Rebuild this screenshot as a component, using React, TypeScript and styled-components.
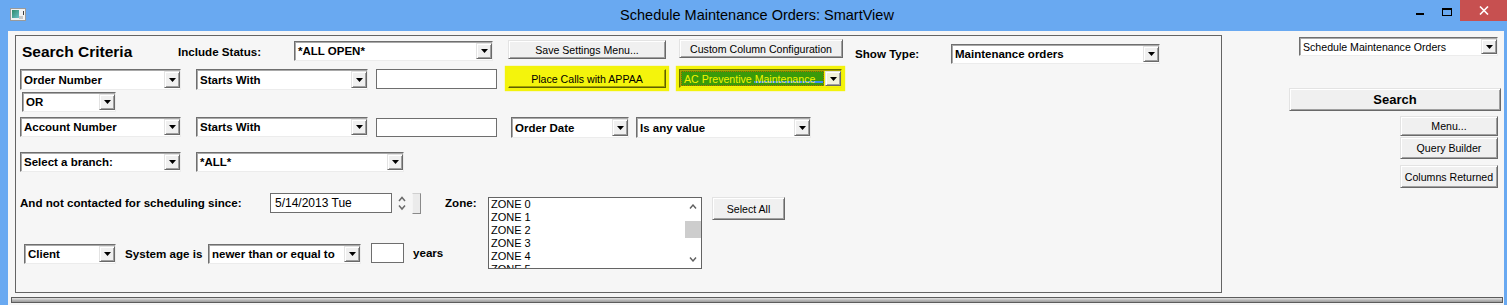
import React from 'react';
import styled, { createGlobalStyle, css } from 'styled-components';

const BLUE = '#69a9f1';
const FACE = '#f6f6f6';

const GlobalStyle = createGlobalStyle`
  html, body { margin: 0; padding: 0; background: ${FACE}; }
  body { font-family: "Liberation Sans", Arial, sans-serif; color: #000; overflow: hidden; }
  * { box-sizing: border-box; }
`;

type Pos = { $ml?: number; $mt?: number };
type Size = { $w: number; $h: number };

const pos = css<Pos>`
  flex-shrink: 0;
  margin-left: ${p => p.$ml ?? 0}px;
  margin-top: ${p => p.$mt ?? 0}px;
`;

const Window = styled.div`
  width: 1507px;
  height: 305px;
  display: flex;
  flex-direction: column;
  background: ${BLUE};
`;

const TitleBar = styled.div`
  height: 31px;
  flex-shrink: 0;
  display: grid;
  grid-template-columns: 1fr auto 1fr;
  align-items: start;
`;

const AppIcon = styled.svg`
  margin: 8px 0 0 10px;
`;

const Title = styled.div`
  padding-left: 7px;
  font-size: 14.5px;
  line-height: 31px;
  color: #000;
  white-space: nowrap;
`;

const Controls = styled.div`
  justify-self: end;
  display: flex;
  align-items: flex-start;
`;

const MinGlyph = styled.div`
  width: 8px;
  height: 2px;
  background: #000;
  margin: 13px 18px 0 0;
`;

const MaxGlyph = styled.div`
  width: 10px;
  height: 8px;
  border: 1px solid #000;
  border-top-width: 2px;
  margin: 8px 8px 0 0;
`;

const CloseBox = styled.div`
  width: 47px;
  height: 21px;
  background: #c75050;
  display: flex;
  align-items: center;
  justify-content: center;
`;

const Body = styled.div`
  flex: 1;
  margin: 0 3px 0 8px;
  background: ${FACE};
  display: flex;
  flex-direction: column;
`;

const Main = styled.div`
  display: flex;
  align-items: flex-start;
`;

const GroupBox = styled.div`
  margin: 4px 0 0 7px;
  width: 1207px;
  height: 258px;
  border: 1px solid #646464;
  flex-shrink: 0;
`;

const Row = styled.div<{ $mt: number; $h: number }>`
  display: flex;
  align-items: flex-start;
  margin-top: ${p => p.$mt}px;
  height: ${p => p.$h}px;
`;

const Column = styled.div<{ $w: number }>`
  width: ${p => p.$w}px;
  flex-shrink: 0;
  display: flex;
  flex-direction: column;
`;

const Heading = styled.div<Pos & { $w: number }>`
  ${pos};
  width: ${p => p.$w}px;
  font-size: 15.5px;
  font-weight: bold;
  line-height: 18px;
  white-space: nowrap;
`;

const Label = styled.div<Pos & { $w?: number }>`
  ${pos};
  width: ${p => (p.$w ? `${p.$w}px` : 'auto')};
  font-size: 11.6px;
  font-weight: bold;
  line-height: 14px;
  white-space: nowrap;
`;

const ComboBox = styled.div<Pos & Size & { $hl?: boolean }>`
  ${pos};
  width: ${p => p.$w}px;
  height: ${p => p.$h}px;
  display: flex;
  padding: 1px 0 1px 1px;
  background: ${p => (p.$hl ? '#f4f40c' : '#fff')};
  border: 1px solid;
  border-color: ${p => (p.$hl ? '#6a6a00 #f0f000 #f0f000 #6a6a00' : '#6f6f6f #ececec #ececec #6f6f6f')};
  box-shadow: ${p => (p.$hl ? 'inset 1px 1px 0 #a5a500, 0 0 1px 3px #f3f30b' : 'inset 1px 1px 0 #a9a9a9')};
`;

const ComboText = styled.div<{ $regular?: boolean; $hl?: boolean }>`
  flex: 1;
  min-width: 0;
  display: flex;
  align-items: center;
  padding-left: 2px;
  font-size: ${p => (p.$regular ? '10.6px' : '11.5px')};
  font-weight: ${p => (p.$regular ? 'normal' : 'bold')};
  white-space: nowrap;
  overflow: hidden;
  ${p =>
    p.$hl &&
    css`
      margin: 0 1px 0 0;
      border: 1px dotted #b86a00;
      color: #f4f400;
      background: linear-gradient(to right, transparent 72px, #3c8ff5 72px) left bottom 2px / 100% 2px no-repeat,
        #3a9a0a;
    `}
`;

const ArrowButton = styled.div<{ $hl?: boolean }>`
  width: 16px;
  flex-shrink: 0;
  display: flex;
  align-items: center;
  justify-content: center;
  background: ${p => (p.$hl ? '#f2f2dc' : '#f0f0f0')};
  border: 1px solid;
  border-color: #e3e3e3 #696969 #696969 #e3e3e3;
  box-shadow: inset 1px 1px 0 #fff, inset -1px -1px 0 #a0a0a0;
`;

const Button = styled.div<Pos & Size & { $bold?: boolean; $hl?: boolean }>`
  ${pos};
  width: ${p => p.$w}px;
  height: ${p => p.$h}px;
  display: flex;
  align-items: center;
  justify-content: center;
  background: ${p => (p.$hl ? '#f4f40c' : '#f0f0f0')};
  border: 1px solid;
  border-color: ${p => (p.$hl ? '#f4f40c #5e5e00 #5e5e00 #f4f40c' : '#e3e3e3 #696969 #696969 #e3e3e3')};
  box-shadow: ${p =>
    p.$hl ? 'inset -1px -1px 0 #a0a000, 0 0 1px 3px #f3f30b' : 'inset 1px 1px 0 #fff, inset -1px -1px 0 #a0a0a0'};
  font-size: ${p => (p.$bold ? '13px' : '10.6px')};
  font-weight: ${p => (p.$bold ? 'bold' : 'normal')};
  white-space: nowrap;
`;

const TextBox = styled.div<Pos & Size>`
  ${pos};
  width: ${p => p.$w}px;
  height: ${p => p.$h}px;
  background: #fff;
  border: 1px solid #6e6e6e;
  display: flex;
  align-items: center;
  padding-left: 4px;
  font-size: 12px;
  white-space: nowrap;
`;

const Spinner = styled.svg<Pos>`
  ${pos};
  display: block;
`;

const StubButton = styled.div<Pos & Size>`
  ${pos};
  width: ${p => p.$w}px;
  height: ${p => p.$h}px;
  background: #ebebeb;
  border: 1px solid;
  border-color: #cfcfcf #8a8a8a #8a8a8a #f4f4f4;
`;

const ListBox = styled.div<Pos & Size>`
  ${pos};
  width: ${p => p.$w}px;
  height: ${p => p.$h}px;
  border: 1px solid #646464;
  background: #fff;
  display: flex;
  overflow: hidden;
`;

const ListItems = styled.div`
  flex: 1;
  overflow: hidden;
`;

const ListItem = styled.div`
  font-size: 11px;
  line-height: 13px;
  padding-left: 2px;
  white-space: nowrap;
`;

const ScrollBar = styled.div`
  width: 16px;
  display: flex;
  flex-direction: column;
  background: #fff;
`;

const ScrollArrow = styled.div`
  height: 17px;
  display: flex;
  align-items: center;
  justify-content: center;
`;

const ScrollThumb = styled.div`
  margin-top: 6px;
  height: 17px;
  background: #cdcdcd;
`;

const ScrollTrack = styled.div`
  flex: 1;
`;

const RightPanel = styled.div`
  display: flex;
  flex-direction: column;
  align-items: flex-start;
`;

const BottomBar = styled.div`
  margin: 4px 0 0 3px;
  width: 1492px;
  height: 6px;
  border: 1px solid #5c5c5c;
  background: linear-gradient(#e4e4e4, #b4b4b4 60%, #9c9c9c);
`;

const Triangle = () => (
  <svg width="7" height="4" viewBox="0 0 7 4">
    <polygon points="0,0 7,0 3.5,4" fill="#000" />
  </svg>
);

const Chevron = ({ up }: { up?: boolean }) => (
  <svg width="8" height="5" viewBox="0 0 8 5">
    <polyline
      points={up ? '1,4.5 4,1 7,4.5' : '1,0.5 4,4 7,0.5'}
      fill="none"
      stroke="#606060"
      strokeWidth="1.4"
    />
  </svg>
);

type ComboProps = Pos & {
  w: number;
  h: number;
  text: string;
  regular?: boolean;
  hl?: boolean;
};

const Combo = ({ w, h, text, regular, hl, $ml, $mt }: ComboProps) => (
  <ComboBox $w={w} $h={h} $ml={$ml} $mt={$mt} $hl={hl}>
    <ComboText $regular={regular} $hl={hl}>{text}</ComboText>
    <ArrowButton $hl={hl}>
      <Triangle />
    </ArrowButton>
  </ComboBox>
);

const zones = ['ZONE 0', 'ZONE 1', 'ZONE 2', 'ZONE 3', 'ZONE 4', 'ZONE 5'];

export default function App() {
  return (
    <>
      <GlobalStyle />
      <Window>
        <TitleBar>
          <AppIcon width="16" height="13" viewBox="0 0 16 13">
            <defs>
              <linearGradient id="ico" x1="0" y1="0" x2="1" y2="1">
                <stop offset="0" stopColor="#2e8a6a" />
                <stop offset="1" stopColor="#6cc0c8" />
              </linearGradient>
            </defs>
            <rect x="0.5" y="0.5" width="15" height="12" fill="#f2f2f2" stroke="#9a9a9a" />
            <rect x="2" y="2" width="7" height="8" fill="url(#ico)" />
            <rect x="9" y="8" width="4" height="3" fill="#c8c8c8" />
            <rect x="13" y="3" width="1" height="4" fill="#404040" />
          </AppIcon>
          <Title>Schedule Maintenance Orders: SmartView</Title>
          <Controls>
            <MinGlyph />
            <MaxGlyph />
            <CloseBox>
              <svg width="10" height="9" viewBox="0 0 10 9">
                <path d="M1 0.5 L9 8.5 M9 0.5 L1 8.5" stroke="#fff" strokeWidth="1.6" />
              </svg>
            </CloseBox>
          </Controls>
        </TitleBar>

        <Body>
          <Main>
            <GroupBox>
              <Row $mt={3} $h={25}>
                <Heading $ml={6} $mt={4} $w={156}>Search Criteria</Heading>
                <Label $mt={6} $w={116}>Include Status:</Label>
                <Combo $mt={2} w={199} h={20} text="*ALL OPEN*" />
                <Button $ml={15} $mt={1} $w={158} $h={19}>Save Settings Menu...</Button>
                <Button $ml={13} $w={164} $h={19}>Custom Column Configuration</Button>
                <Label $ml={12} $mt={8} $w={96}>Show Type:</Label>
                <Combo $mt={5} w={209} h={20} text="Maintenance orders" />
              </Row>

              <Row $mt={5} $h={21}>
                <Combo $ml={4} w={161} h={21} text="Order Number" />
                <Combo $ml={15} w={172} h={21} text="Starts With" />
                <TextBox $ml={8} $w={121} $h={20} />
                <Button $ml={11} $w={158} $h={19} $hl>Place Calls with APPAA</Button>
                <Combo $ml={13} w={163} h={19} text="AC Preventive Maintenance" regular hl />
              </Row>

              <Row $mt={2} $h={20}>
                <Combo $ml={6} w={94} h={20} text="OR" />
              </Row>

              <Row $mt={5} $h={21}>
                <Combo $ml={4} w={161} h={20} text="Account Number" />
                <Combo $ml={15} w={172} h={20} text="Starts With" />
                <TextBox $ml={8} $mt={1} $w={121} $h={19} />
                <Combo $ml={14} w={118} h={21} text="Order Date" />
                <Combo $ml={7} w={175} h={21} text="Is any value" />
              </Row>

              <Row $mt={14} $h={20}>
                <Combo $ml={4} w={161} h={20} text="Select a branch:" />
                <Combo $ml={15} w={208} h={20} text="*ALL*" />
              </Row>

              <Row $mt={21} $h={76}>
                <Column $w={472}>
                  <Row $mt={0} $h={21}>
                    <Label $ml={4} $mt={3} $w={250}>And not contacted for scheduling since:</Label>
                    <TextBox $w={122} $h={20}>5/14/2013 Tue</TextBox>
                    <Spinner $ml={6} $mt={3} width="8" height="15" viewBox="0 0 8 15">
                      <polyline points="1,5 4,1.5 7,5" fill="none" stroke="#6a6a6a" strokeWidth="1.5" />
                      <polyline points="1,9.5 4,13 7,9.5" fill="none" stroke="#6a6a6a" strokeWidth="1.5" />
                    </Spinner>
                    <StubButton $ml={6} $w={9} $h={21} />
                    <Label $ml={24} $mt={3}>Zone:</Label>
                  </Row>
                  <Row $mt={29} $h={21}>
                    <Combo $ml={8} $mt={1} w={92} h={20} text="Client" />
                    <Label $ml={9} $mt={4} $w={83}>System age is</Label>
                    <Combo $mt={1} w={153} h={20} text="newer than or equal to" />
                    <TextBox $ml={10} $w={33} $h={20} />
                    <Label $ml={9} $mt={3}>years</Label>
                  </Row>
                </Column>
                <ListBox $mt={4} $w={214} $h={72}>
                  <ListItems>
                    {zones.map(z => (
                      <ListItem key={z}>{z}</ListItem>
                    ))}
                  </ListItems>
                  <ScrollBar>
                    <ScrollArrow>
                      <Chevron up />
                    </ScrollArrow>
                    <ScrollThumb />
                    <ScrollTrack />
                    <ScrollArrow>
                      <Chevron />
                    </ScrollArrow>
                  </ScrollBar>
                </ListBox>
                <Button $ml={10} $mt={4} $w={73} $h={23}>Select All</Button>
              </Row>
            </GroupBox>

            <RightPanel>
              <Combo $ml={77} $mt={6} w={199} h={19} text="Schedule Maintenance Orders" regular />
              <Button $ml={67} $mt={32} $w={212} $h={23} $bold>Search</Button>
              <Button $ml={178} $mt={5} $w={98} $h={20}>Menu...</Button>
              <Button $ml={178} $mt={1} $w={98} $h={22}>Query Builder</Button>
              <Button $ml={178} $mt={6} $w={98} $h={23}>Columns Returned</Button>
            </RightPanel>
          </Main>
          <BottomBar />
        </Body>
      </Window>
    </>
  );
}
